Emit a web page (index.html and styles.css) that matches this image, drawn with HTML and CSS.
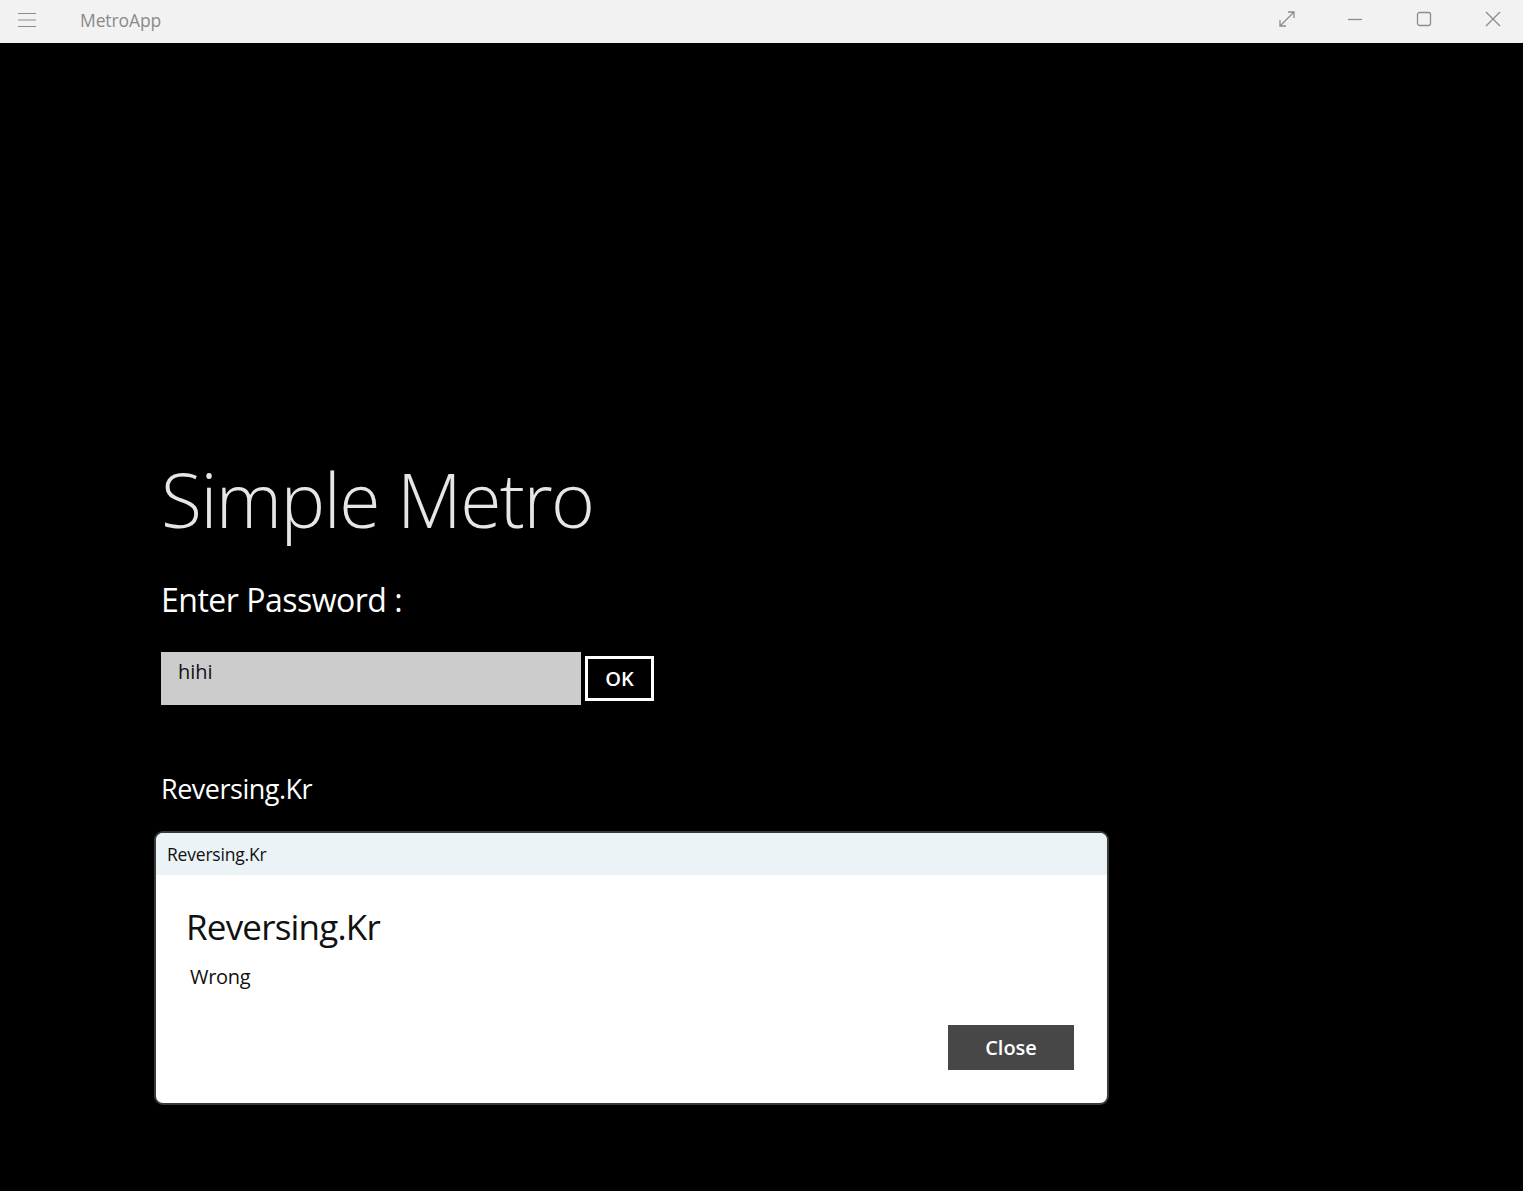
FILE: index.html
```html
<!DOCTYPE html>
<html>
<head>
<meta charset="utf-8">
<title>MetroApp</title>
<link rel="stylesheet" href="styles.css">
</head>
<body>
<div class="titlebar">
  <div class="tb-left">
    <svg class="hamburger" width="20" height="16" viewBox="0 0 20 16">
      <path d="M1 1.5H19M1 8H19M1 14.5H19" stroke="#8c8c8c" stroke-width="1.2" fill="none"/>
    </svg>
    <span class="app-name">MetroApp</span>
  </div>
  <div class="tb-right">
    <div class="tb-btn">
      <svg width="18" height="18" viewBox="0 0 18 18"><path d="M2 16L16 2M10 2H16V8M2 10V16H8" stroke="#8c8c8c" stroke-width="1.3" fill="none"/></svg>
    </div>
    <div class="tb-btn">
      <svg width="18" height="18" viewBox="0 0 18 18"><path d="M2 9.5H16" stroke="#8c8c8c" stroke-width="1.3" fill="none"/></svg>
    </div>
    <div class="tb-btn">
      <svg width="18" height="18" viewBox="0 0 18 18"><rect x="2.5" y="2.5" width="13" height="13" rx="2" stroke="#8c8c8c" stroke-width="1.3" fill="none"/></svg>
    </div>
    <div class="tb-btn">
      <svg width="18" height="18" viewBox="0 0 18 18"><path d="M2 2L16 16M16 2L2 16" stroke="#8c8c8c" stroke-width="1.3" fill="none"/></svg>
    </div>
  </div>
</div>
<main class="content">
  <h1 class="title">Simple Metro</h1>
  <div class="label">Enter Password :</div>
  <div class="form-row">
    <div class="input">hihi</div>
    <div class="ok-btn">OK</div>
  </div>
  <div class="brand">Reversing.Kr</div>
  <div class="dialog">
    <div class="dlg-header">Reversing.Kr</div>
    <div class="dlg-body">
      <div class="dlg-title">Reversing.Kr</div>
      <div class="dlg-msg">Wrong</div>
      <div class="dlg-actions">
        <div class="close-btn">Close</div>
      </div>
    </div>
  </div>
</main>
</body>
</html>
```
FILE: styles.css
```css
html, body {
  margin: 0;
  padding: 0;
  background: #000;
  font-family: "Open Sans", "Noto Sans", sans-serif;
}
body {
  width: 1523px;
  height: 1191px;
  overflow: hidden;
}
.titlebar {
  height: 43px;
  background: #f2f2f2;
  display: flex;
  justify-content: space-between;
  align-items: center;
}
.tb-left {
  display: flex;
  align-items: center;
}
.hamburger {
  margin-left: 17px;
  margin-top: -4px;
}
.app-name {
  margin-left: 43px;
  font-size: 17.5px;
  color: #8a8a8a;
  letter-spacing: -0.1px;
  margin-top: -4px;
}
.tb-right {
  display: flex;
  margin-right: -4px;
}
.tb-btn {
  width: 68.7px;
  height: 43px;
  display: flex;
  align-items: center;
  justify-content: center;
  margin-top: -5px;
}
.content {
  padding-left: 161px;
}
.title {
  margin: 0;
  padding-top: 406px;
  font-weight: 300;
  font-size: 75px;
  line-height: 100px;
  color: #e6e6e6;
  letter-spacing: -1.5px;
}
.label {
  margin-top: 31px;
  font-size: 32px;
  line-height: 40px;
  color: #fff;
  letter-spacing: -0.5px;
}
.form-row {
  display: flex;
  align-items: center;
  margin-top: 32px;
}
.input {
  width: 420px;
  height: 53px;
  background: #cccccc;
  box-sizing: border-box;
  padding: 6px 17px;
  font-size: 20px;
  line-height: 28px;
  color: #111;
}
.ok-btn {
  margin-left: 4px;
  width: 69px;
  height: 45px;
  box-sizing: border-box;
  border: 3px solid #fff;
  color: #fff;
  font-size: 20px;
  font-weight: 600;
  display: flex;
  align-items: center;
  justify-content: center;
}
.brand {
  margin-top: 66px;
  font-size: 27px;
  line-height: 36px;
  color: #fff;
  letter-spacing: -0.5px;
}
.dialog {
  margin-top: 24px;
  margin-left: -7px;
  width: 955px;
  height: 274px;
  box-sizing: border-box;
  border: 2px solid #3a3a3a;
  border-radius: 9px;
  overflow: hidden;
  background: #fff;
  display: flex;
  flex-direction: column;
}
.dlg-header {
  height: 42px;
  background: #ebf3f7;
  font-size: 17.5px;
  line-height: 42px;
  padding-left: 11px;
  color: #111;
  letter-spacing: -0.2px;
  flex-shrink: 0;
}
.dlg-body {
  flex: 1;
  padding: 29px 33px 0 30px;
  display: flex;
  flex-direction: column;
}
.dlg-title {
  font-size: 35px;
  line-height: 46px;
  color: #111;
  letter-spacing: -0.8px;
}
.dlg-msg {
  margin-top: 12px;
  margin-left: 4px;
  font-size: 20px;
  line-height: 30px;
  color: #111;
  letter-spacing: -0.3px;
}
.dlg-actions {
  display: flex;
  justify-content: flex-end;
  margin-top: 33px;
}
.close-btn {
  width: 126px;
  height: 45px;
  background: #474747;
  color: #fff;
  font-size: 20px;
  font-weight: 600;
  display: flex;
  align-items: center;
  justify-content: center;
}
```
